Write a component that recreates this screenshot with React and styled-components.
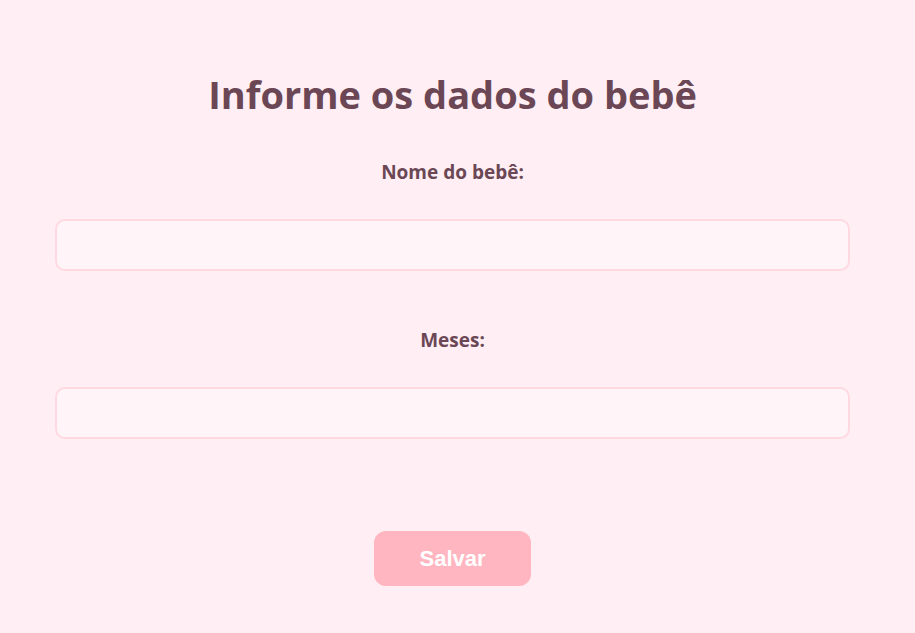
import React, { useState } from "react";
import styled, { createGlobalStyle } from "styled-components";

const Global = createGlobalStyle`
  html, body {
    margin: 0;
    padding: 0;
    background: #ffeef3;
  }
  body {
    font-family: "Open Sans", Lato, sans-serif;
  }
`;

function App() {
  const [nome, setNome] = useState("");
  const [meses, setMeses] = useState("");
  return (
    <>
      <Global />
      <Page>
        <Title>Informe os dados do bebê</Title>
        <Field>
          <Label htmlFor="nome">Nome do bebê:</Label>
          <Input id="nome" value={nome} onChange={(e) => setNome(e.target.value)} />
        </Field>
        <Field>
          <Label htmlFor="meses">Meses:</Label>
          <Input id="meses" value={meses} onChange={(e) => setMeses(e.target.value)} />
        </Field>
        <Button>Salvar</Button>
      </Page>
    </>
  );
}

const Page = styled.main`
  display: flex;
  flex-direction: column;
  align-items: center;
  padding: 66px 65px 40px 55px;
`;

const Title = styled.h1`
  margin: 0 0 38px;
  font-size: 38px;
  font-weight: 700;
  color: #6b4756;
  line-height: 56px;
`;

const Field = styled.div`
  width: 100%;
  display: flex;
  flex-direction: column;
  align-items: center;
  margin-bottom: 57px;
`;

const Label = styled.label`
  font-size: 19px;
  font-weight: 700;
  color: #6b4756;
  line-height: 24px;
  margin-bottom: 35px;
`;

const Input = styled.input`
  box-sizing: border-box;
  width: 100%;
  height: 52px;
  padding: 0 14px;
  border: 2px solid #ffd9e2;
  border-radius: 10px;
  background: #fff5f8;
  font-size: 16px;
  color: #6b4756;
  outline: none;
`;

const Button = styled.button`
  margin-top: 35px;
  width: 157px;
  height: 55px;
  border: none;
  border-radius: 12px;
  background: #ffb6c1;
  color: #fff;
  font-family: "Liberation Sans", Arial, sans-serif;
  font-size: 22px;
  font-weight: 700;
  cursor: pointer;
`;

export default App;
